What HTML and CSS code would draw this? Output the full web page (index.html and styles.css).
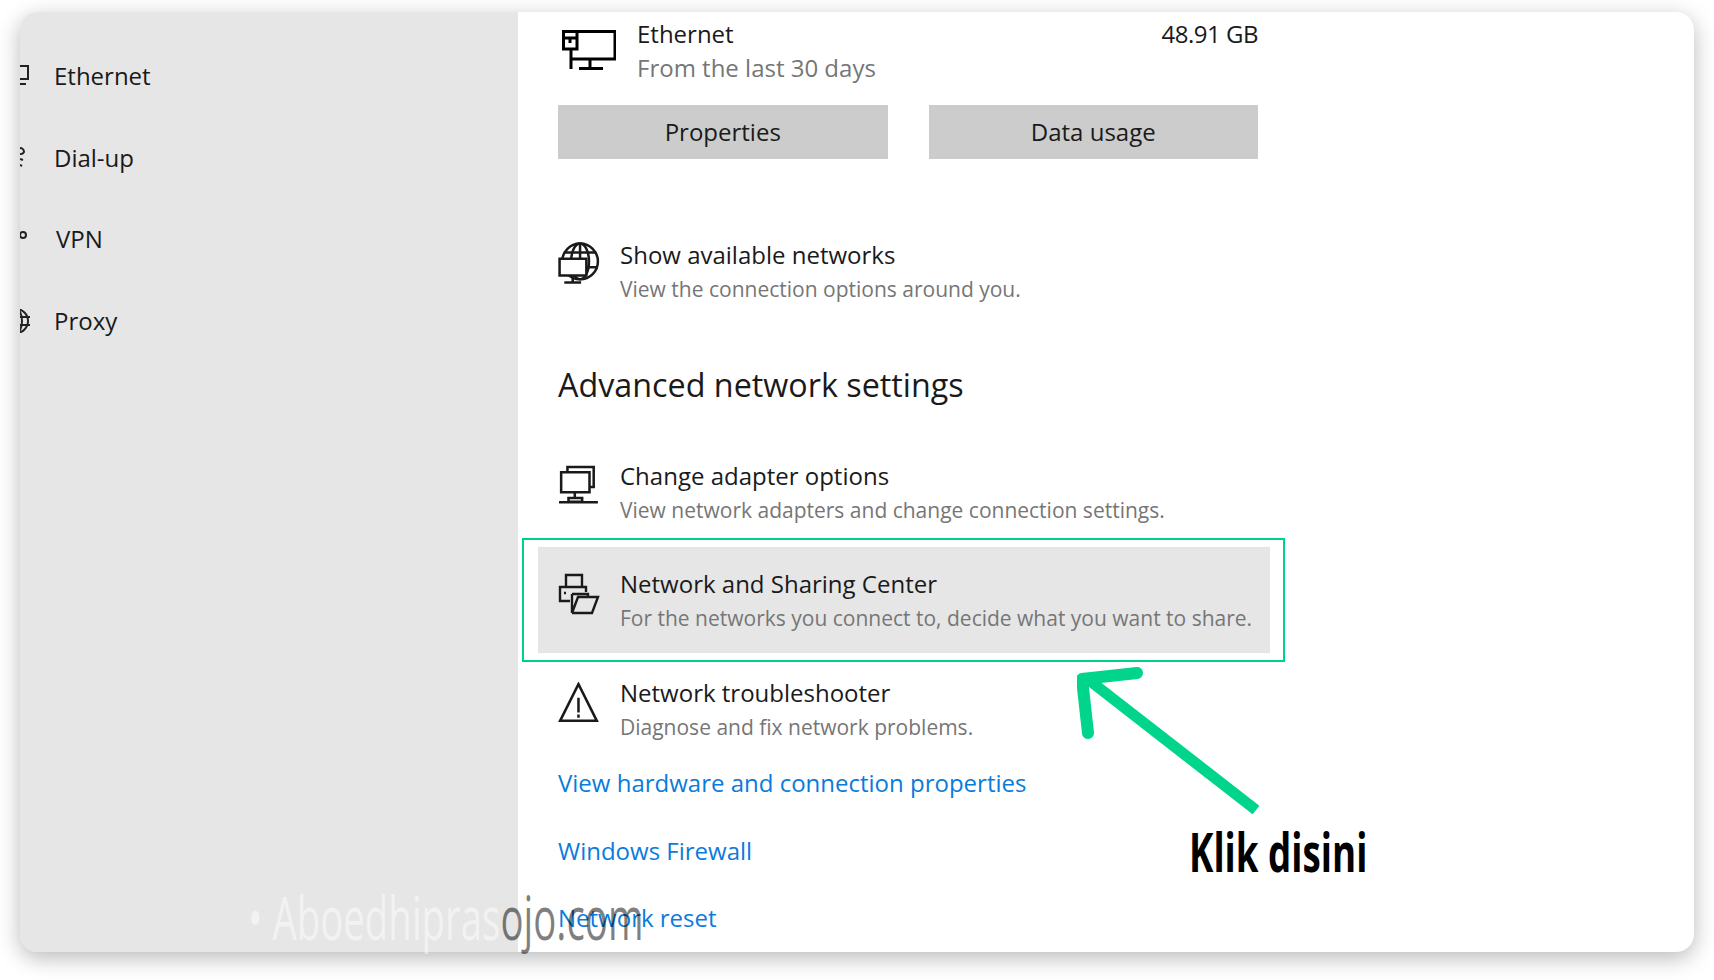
FILE: index.html
```html
<!DOCTYPE html>
<html lang="en">
<head>
    <meta charset="UTF-8">
    <meta name="viewport" content="width=device-width, initial-scale=1.0">
    <title>Network settings</title>
    <link rel="stylesheet" href="styles.css">
</head>
<body>

<div class="window">
    <nav class="sidebar">
        <div class="nav-item">
            <svg class="nav-icon" viewBox="0 0 24 24"><path d="M6 2H22V15H6M20 20H8"/></svg>
            <span>Ethernet</span>
        </div>
        <div class="nav-item">
            <svg class="nav-icon" viewBox="0 0 24 24"><path d="M14 3a4 4 0 0 1 4 4 4 4 0 0 1-4 2M14 14l3 1M14 20l2 1"/></svg>
            <span>Dial-up</span>
        </div>
        <div class="nav-item">
            <svg class="nav-icon" viewBox="0 0 24 24"><circle cx="17" cy="8" r="3"/></svg>
            <span class="nav-vpn">VPN</span>
        </div>
        <div class="nav-item">
            <svg class="nav-icon" viewBox="0 0 24 24"><circle cx="10" cy="12" r="12"/><ellipse cx="10" cy="12" rx="6" ry="12"/><path d="M0 8H24M0 16H24"/></svg>
            <span>Proxy</span>
        </div>
    </nav>

    <main class="content">
        <div class="status">
            <svg class="status-icon" viewBox="0 0 54 42"><path d="M10 1.500H53V29H10M1.500 1.500H15V19H1.500ZM1.500 8H15M8 8V13M9 19V39M28 29V38M17 38.500H41"/></svg>
            <div class="status-text">
                <div class="row-title">Ethernet</div>
                <div class="status-sub">From the last 30 days</div>
            </div>
            <div class="status-usage">48.91 GB</div>
        </div>
        <div class="buttons">
            <div class="button">Properties</div>
            <div class="button">Data usage</div>
        </div>

        <div class="row row-first">
            <svg class="row-icon" viewBox="0 0 40 40">
                <circle cx="21" cy="18.500" r="17"/>
                <ellipse cx="21" cy="18.500" rx="8.500" ry="17"/>
                <path d="M21 1.500V16M6 10H36"/>
                <path class="icon-front" d="M1.500 16H27V32H1.500Z"/>
                <path d="M14 32V38M6 38.500H22M27 24H38"/>
            </svg>
            <div>
                <div class="row-title">Show available networks</div>
                <div class="row-desc">View the connection options around you.</div>
            </div>
        </div>

        <h2 class="section-title">Advanced network settings</h2>

        <div class="row row-adapter">
            <svg class="row-icon" viewBox="0 0 40 40"><path d="M3 7H30V26H3ZM9 7V2H34V21H30M16 26V31M10 31.500H23V35H10ZM1 35.500H38"/></svg>
            <div>
                <div class="row-title">Change adapter options</div>
                <div class="row-desc">View network adapters and change connection settings.</div>
            </div>
        </div>
        <div class="row row-marked">
            <svg class="row-icon" viewBox="0 0 42 42"><path d="M8 14V2H24V14M12 28H2V14H28V19M6 20H8M14 21H30V23M14 21V40M14 40H34L40 24H20L14 40"/></svg>
            <div>
                <div class="row-title">Network and Sharing Center</div>
                <div class="row-desc">For the networks you connect to, decide what you want to share.</div>
            </div>
        </div>
        <div class="row">
            <svg class="row-icon" viewBox="0 0 40 40"><path d="M19.500 2L2 37H37ZM19.500 15V29M19.500 31V34"/></svg>
            <div>
                <div class="row-title">Network troubleshooter</div>
                <div class="row-desc">Diagnose and fix network problems.</div>
            </div>
        </div>

        <div class="links">
            <a class="link">View hardware and connection properties</a>
            <a class="link">Windows Firewall</a>
            <a class="link">Network reset</a>
        </div>
    </main>
</div>

<!-- arrow and caption sit on top of the screenshot -->
<svg class="pointer" viewBox="0 0 190 150" width="190" height="150">
    <path class="pointer-shaft" d="M179 143L8 10"/>
    <path class="pointer-head" d="M60 6L5 12L11 66"/>
</svg>
<div class="caption">Klik disini</div>
<div class="watermark"><span class="mark-light">• Aboedhipras</span><span class="mark-dark">ojo.com</span></div>

</body>
</html>
```

FILE: styles.css
```css
* {
    box-sizing: border-box;
}
body {
    margin: 0;
    height: 980px;
    overflow: hidden;
    background-color: #fff;
    font-family: 'Open Sans', 'Noto Sans', sans-serif;
    color: #1a1a1a;
}
.window {
    display: flex;
    margin: 12px 20px 0;
    height: 940px;
    background-color: #fff;
    border-radius: 18px;
    overflow: hidden;
    box-shadow: 0 6px 22px rgba(0, 0, 0, 0.28);
}
.sidebar {
    width: 498px;
    padding-top: 23px;
    background-color: #e6e6e6;
    font-size: 24px;
}
.nav-item {
    display: flex;
    align-items: center;
    gap: 24px;
    height: 81.6px;
    margin-left: -14px;
}
.nav-vpn {
    margin-left: 2px;
}
.nav-icon {
    width: 24px;
    height: 24px;
    flex: none;
    fill: none;
    stroke: #222;
    stroke-width: 2;
}
.content {
    flex: 1;
    padding: 5px 0 0 40px;
    font-size: 24px;
}
.status {
    display: flex;
    width: 700px;
    gap: 21px;
}
.status-icon {
    width: 54px;
    height: 42px;
    margin: 13px 0 0 4px;
    flex: none;
    fill: none;
    stroke: #000;
    stroke-width: 3;
}
.status-text {
    flex: 1;
}
.status-sub {
    line-height: 34px;
    color: #767676;
}
.status-usage {
    line-height: 34px;
    letter-spacing: -0.5px;
}
.buttons {
    display: flex;
    gap: 41px;
    width: 700px;
    margin-top: 20px;
}
.button {
    flex: 1;
    height: 54px;
    line-height: 54px;
    text-align: center;
    background-color: #ccc;
}
.row {
    position: relative;
    display: flex;
    gap: 20px;
    width: 732px;
    height: 106px;
    margin: 3px 0 0 -20px;
    padding: 20px 0 0 20px;
}
.row-first {
    margin-top: 59px;
}
.row-adapter {
    margin-top: 33px;
}
.row-marked {
    margin-top: 2px;
    background-color: #e6e6e6;
}
.row-marked::after {
    content: "";
    position: absolute;
    top: -9px;
    left: -16px;
    right: -15px;
    bottom: -9px;
    border: 2px solid #00cf8d;
}
.row-icon {
    width: 42px;
    height: 42px;
    margin-top: 6px;
    flex: none;
    fill: none;
    stroke: #1a1a1a;
    stroke-width: 2.4;
}
.row-first .row-icon {
    margin-top: 4px;
}
.icon-front {
    fill: #fff;
}
.row-title {
    line-height: 34px;
}
.row-desc {
    margin-top: 1px;
    line-height: 33px;
    font-size: 21px;
    color: #767676;
}
.section-title {
    margin: 38px 0 0;
    font-size: 32.3px;
    font-weight: 400;
    line-height: 44px;
}
.links {
    display: flex;
    flex-direction: column;
    align-items: flex-start;
    gap: 33.500px;
    margin-top: 4px;
}
.link {
    line-height: 34px;
    color: #0a7bdc;
}
.pointer {
    position: absolute;
    left: 1077px;
    top: 667px;
    fill: none;
    stroke: #00d58b;
    stroke-width: 12;
}
.pointer-shaft {
    stroke-width: 11;
}
.pointer-head {
    stroke-linecap: round;
    stroke-linejoin: round;
}
.caption {
    position: absolute;
    left: 1189px;
    top: 816px;
    font-size: 54px;
    font-weight: 700;
    line-height: 70px;
    color: #000;
    white-space: nowrap;
    transform: scaleX(0.68);
    transform-origin: left top;
}
.watermark {
    position: absolute;
    left: 248px;
    top: 875px;
    font-size: 60px;
    font-weight: 500;
    line-height: 84px;
    white-space: nowrap;
    transform: scaleX(0.64);
    transform-origin: left top;
}
.mark-light {
    color: rgba(255, 255, 255, 0.5);
}
.mark-dark {
    color: rgba(0, 0, 0, 0.5);
}
```
